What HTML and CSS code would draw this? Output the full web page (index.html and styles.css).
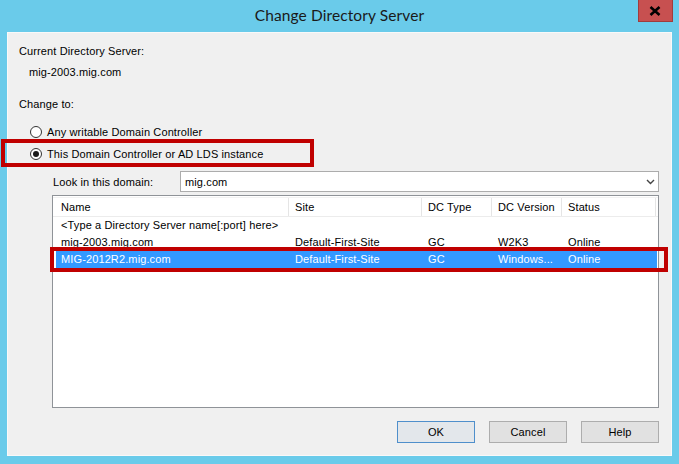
FILE: index.html
```html
<!DOCTYPE html>
<html>
<head>
<meta charset="utf-8">
<title>Change Directory Server</title>
<link rel="stylesheet" href="styles.css">
</head>
<body>
<div class="window">
  <div class="titlebar">
    <div class="title">Change Directory Server</div>
    <div class="close">
      <svg width="12" height="10" viewBox="0 0 12 10"><path d="M1.5 1 L10.5 9 M10.5 1 L1.5 9" stroke="#000" stroke-width="2.6" fill="none"/></svg>
    </div>
  </div>
  <div class="client">
    <div class="line">Current Directory Server:</div>
    <div class="line cur-value">mig-2003.mig.com</div>
    <div class="line change-label">Change to:</div>
    <div class="radios">
      <div class="radio"><span class="circle"></span><span>Any writable Domain Controller</span></div>
      <div class="radio"><span class="circle checked"></span><span>This Domain Controller or AD LDS instance</span></div>
    </div>
    <div class="lookin">
      <span class="lookin-label">Look in this domain:</span>
      <div class="combo">
        <span>mig.com</span>
        <svg class="chev" width="9" height="6" viewBox="0 0 9 6"><path d="M1 1 L4.5 4.5 L8 1" stroke="#444" stroke-width="1.4" fill="none"/></svg>
      </div>
    </div>
    <div class="list">
      <div class="header">
        <div class="hcell first">Name</div>
        <div class="hcell">Site</div>
        <div class="hcell">DC Type</div>
        <div class="hcell">DC Version</div>
        <div class="hcell">Status</div>
      </div>
      <div class="row">
        <div class="cell first wide">&lt;Type a Directory Server name[:port] here&gt;</div>
      </div>
      <div class="row">
        <div class="cell first">mig-2003.mig.com</div>
        <div class="cell">Default-First-Site</div>
        <div class="cell">GC</div>
        <div class="cell">W2K3</div>
        <div class="cell">Online</div>
      </div>
      <div class="row selected">
        <div class="cell first">MIG-2012R2.mig.com</div>
        <div class="cell">Default-First-Site</div>
        <div class="cell">GC</div>
        <div class="cell">Windows...</div>
        <div class="cell">Online</div>
      </div>
    </div>
    <div class="buttons">
      <div class="btn default">OK</div>
      <div class="btn">Cancel</div>
      <div class="btn">Help</div>
    </div>
  </div>
</div>
<div class="mark mark-radio"></div>
<div class="mark mark-row"></div>
</body>
</html>
```
FILE: styles.css
```css
* { box-sizing: border-box; }
html, body { margin: 0; padding: 0; }
body {
  width: 679px;
  height: 464px;
  overflow: hidden;
  background: #6acbea;
  position: relative;
  font-family: "Liberation Sans", Arial, sans-serif;
  font-size: 11px;
  letter-spacing: 0.12px;
  color: #000;
}
.window { display: flex; flex-direction: column; height: 100%; }
.titlebar {
  height: 32px;
  display: grid;
  grid-template-columns: 1fr auto 1fr;
}
.title {
  grid-column: 2;
  font-family: Lato, "Noto Sans", sans-serif;
  font-size: 15.5px;
  letter-spacing: 0.1px;
  color: #1a1a1a;
  line-height: 18px;
  padding-top: 6px;
}
.close {
  grid-column: 3;
  justify-self: end;
  align-self: start;
  width: 35px;
  height: 22px;
  margin-right: 6px;
  background: #c75050;
  border: 1px solid #a03c3c;
  border-top: none;
  display: flex;
  align-items: center;
  justify-content: center;
  padding-right: 1px;
}
.client {
  margin: 0 7px 8px 7px;
  background: #f0f0f0;
  border: 1px solid #f9f9f9;
  padding: 12px 12px 12px 11px;
  display: flex;
  flex-direction: column;
}
.line { line-height: 13px; height: 13px; }
.cur-value { margin-top: 8px; padding-left: 10px; }
.change-label { margin-top: 19px; }
.radios { margin-top: 10px; display: flex; flex-direction: column; }
.radio {
  height: 22px;
  display: flex;
  align-items: center;
  gap: 5px;
  padding-left: 11px;
  line-height: 13px;
}
.circle {
  width: 12px;
  height: 12px;
  border-radius: 50%;
  border: 1px solid #333;
  background: #fff;
  display: flex;
  align-items: center;
  justify-content: center;
}
.circle.checked::after {
  content: "";
  width: 6px;
  height: 6px;
  border-radius: 50%;
  background: #1a1a1a;
}
.lookin {
  margin-top: 6px;
  height: 21px;
  display: flex;
  align-items: center;
  padding-left: 34px;
}
.lookin-label { width: 127px; }
.combo {
  flex: 1;
  height: 21px;
  border: 1px solid #acacac;
  background: #fff;
  display: flex;
  align-items: center;
  justify-content: space-between;
  padding: 0 3px 0 4px;
}
.list {
  margin-top: 3px;
  margin-left: 33px;
  height: 213px;
  border: 1px solid #8f9398;
  background: #fff;
  padding-top: 1px;
}
.header {
  display: grid;
  grid-template-columns: 236px 133px 70px 70px 94px;
  height: 20px;
  border-bottom: 1px solid #ececec;
  border-top: 1px solid #f2f2f2;
}
.hcell {
  border-right: 1px solid #e5e5e5;
  padding-left: 6px;
  line-height: 18px;
  white-space: nowrap;
}
.hcell.first { padding-left: 8px; }
.row {
  margin-left: 3px;
  width: 601px;
  height: 17px;
  display: grid;
  grid-template-columns: 233px 133px 70px 70px 95px;
  line-height: 17px;
  white-space: nowrap;
}
.cell { padding-left: 6px; overflow: visible; }
.cell.first { padding-left: 5px; }
.cell.wide { grid-column: 1 / 3; }
.row.selected { background: #3399ff; color: #fff; }
.buttons {
  margin-top: 13px;
  display: flex;
  justify-content: flex-end;
  gap: 14px;
}
.btn {
  width: 78px;
  height: 22px;
  border: 1px solid #adadad;
  background: #e1e1e1;
  display: flex;
  align-items: center;
  justify-content: center;
}
.btn.default { border-color: #4f8fcb; background: #e3e7eb; }
.mark {
  position: absolute;
  border: 4px solid #c00000;
}
.mark-radio { left: 1px; top: 139px; width: 313px; height: 28px; }
.mark-row { left: 50px; top: 247px; width: 618px; height: 25px; }
```
